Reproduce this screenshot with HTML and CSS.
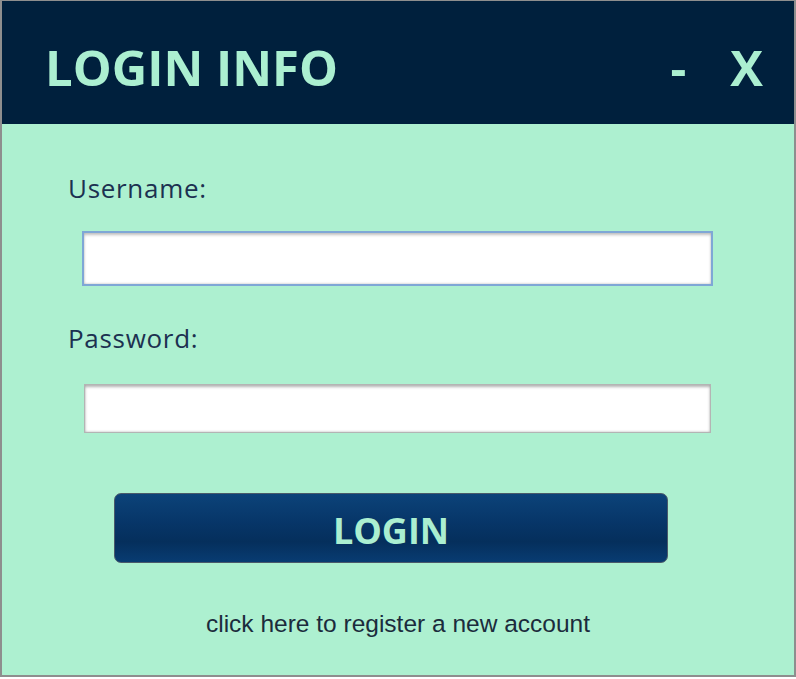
FILE: index.html
```html
<!DOCTYPE html>
<html>
<head>
<meta charset="utf-8">
<title>Login Info</title>
<link rel="stylesheet" href="styles.css">
</head>
<body>
<div class="window">
  <header class="titlebar">
    <h1 class="title">LOGIN INFO</h1>
    <div class="controls">
      <span class="ctrl min">-</span>
      <span class="ctrl close">X</span>
    </div>
  </header>
  <main class="content">
    <label class="label label-user" for="user">Username:</label>
    <input class="field field-user" id="user" type="text">
    <label class="label label-pass" for="pass">Password:</label>
    <input class="field field-pass" id="pass" type="password">
    <button class="login-btn" type="button">LOGIN</button>
    <a class="register" href="#">click here to register a new account</a>
  </main>
</div>
</body>
</html>
```

FILE: styles.css
```css
html, body {
  margin: 0;
  padding: 0;
  background: #ffffff;
}

.window {
  box-sizing: border-box;
  width: 796px;
  height: 677px;
  border-style: solid;
  border-color: #8e8e8e;
  border-width: 1px 2px 2px 2px;
  background: #adf0d0;
  display: flex;
  flex-direction: column;
}

.titlebar {
  height: 123px;
  flex: none;
  background: #00203d;
  display: flex;
  align-items: center;
  justify-content: space-between;
  padding: 8px 31px 0 43px;
  box-sizing: border-box;
}

.title {
  margin: 0;
  font-family: "Open Sans", "Noto Sans", sans-serif;
  font-weight: 700;
  font-size: 49px;
  color: #abefd1;
  letter-spacing: 0;
}

.controls {
  display: flex;
  align-items: center;
  gap: 44px;
  font-family: "Open Sans", "Noto Sans", sans-serif;
  font-weight: 700;
  font-size: 49px;
  color: #abefd1;
}

.content {
  display: flex;
  flex-direction: column;
  align-items: flex-start;
  padding-top: 49px;
}

.label {
  font-family: "Open Sans", "Noto Sans", sans-serif;
  font-size: 26px;
  line-height: 30px;
  letter-spacing: 0.7px;
  color: #1c3150;
  margin-left: 66px;
}

.field {
  box-sizing: border-box;
  background: #ffffff;
  outline: none;
  padding: 0 8px;
  font-size: 18px;
}

.field-user {
  margin: 28px 0 0 80px;
  width: 631px;
  height: 55px;
  border: 2px solid #7fa7d6;
  box-shadow: inset 0 2px 3px rgba(0,0,0,0.25), inset 0 -1px 2px rgba(0,0,0,0.12);
}

.label-pass {
  margin-top: 37px;
}

.field-pass {
  margin: 31px 0 0 82px;
  width: 627px;
  height: 49px;
  border: 1px solid #b4b4b4;
  box-shadow: inset 0 2px 3px rgba(0,0,0,0.3), inset 0 -1px 2px rgba(0,0,0,0.12);
}

.login-btn {
  margin: 60px 0 0 112px;
  width: 554px;
  height: 70px;
  border: 1px solid #4a5a6a;
  border-radius: 7px;
  background: linear-gradient(to bottom, #0c4379 0%, #073669 40%, #052f5c 70%, #083c72 100%);
  color: #abefd1;
  font-family: "Open Sans", "Noto Sans", sans-serif;
  font-weight: 700;
  font-size: 36px;
  padding: 4px 0 0;
  cursor: pointer;
}

.register {
  align-self: center;
  margin-top: 47px;
  font-family: "Liberation Sans", Arial, sans-serif;
  font-size: 24.5px;
  line-height: 28px;
  color: #1b2b3c;
  text-decoration: none;
}
```
